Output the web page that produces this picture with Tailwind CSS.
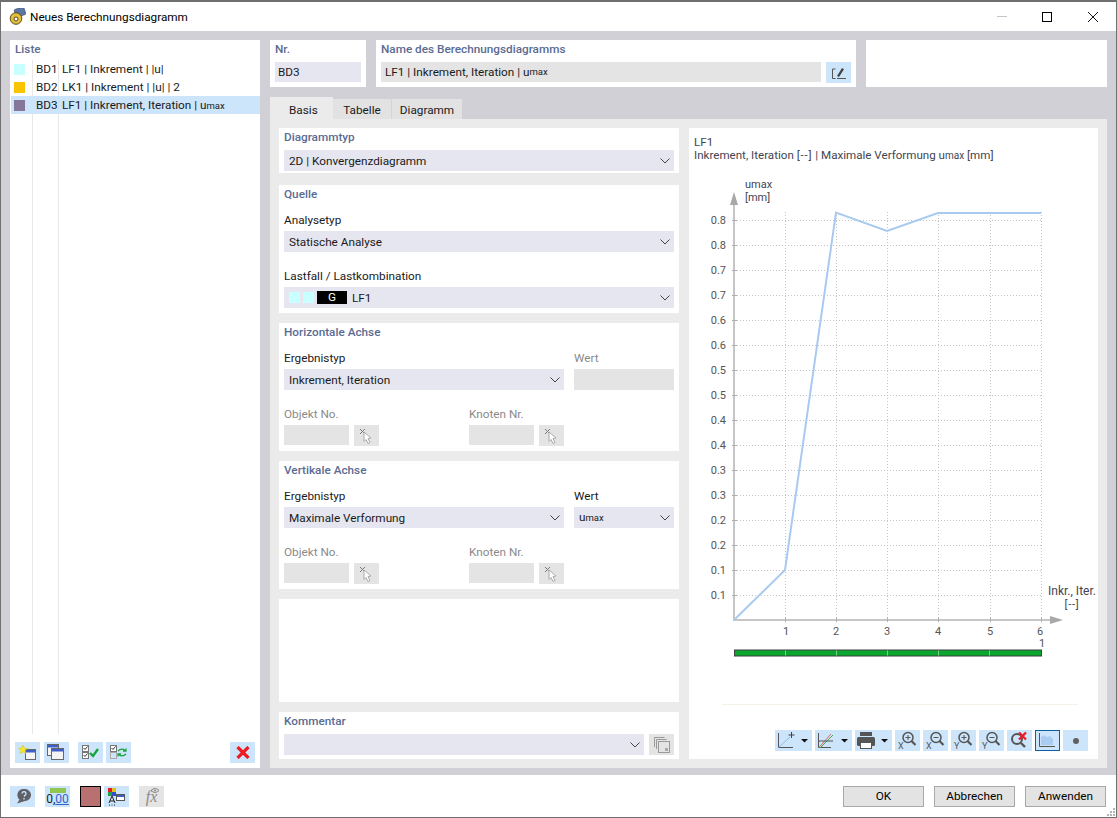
<!DOCTYPE html>
<html><head><meta charset="utf-8"><script src="https://cdn.jsdelivr.net/npm/@tailwindcss/browser@4"></script></head>
<body class="m-0 bg-white">
<div class="relative w-[1117px] h-[818px] flex flex-col overflow-hidden border border-[#6f6f6f] border-t-2 text-[11.75px] leading-[14px] text-[#1a1a1a] font-['Roboto',sans-serif]">
  <!-- title -->
  <div class="h-[29px] shrink-0 bg-white flex items-center">
    <svg class="ml-[8px] w-[17px] h-[17px]" viewBox="0 0 17 17"><rect x="6" y="0" width="10" height="8" rx="1" fill="#5b76a8" stroke="#33415e" stroke-width=".6" transform="rotate(-18 11 4)"/><circle cx="7" cy="10.500" r="5.800" fill="#e2bd3c" stroke="#5a4a1c"/><circle cx="7" cy="11" r="2" fill="#fff" stroke="#5a4a1c"/></svg>
    <span class="ml-[4px] text-black">Neues Berechnungsdiagramm</span>
    <div class="ml-auto flex items-center h-full">
      <span class="w-[10px] h-px bg-[#c4c4c4] mr-[35px]"></span>
      <span class="w-[10px] h-[10px] border border-black mr-[36px]"></span>
      <svg class="w-[10px] h-[10px] mr-[18px]" viewBox="0 0 10 10"><path d="M0 0L10 10M10 0L0 10" stroke="#111" stroke-width="1"/></svg>
    </div>
  </div>
  <!-- body -->
  <div class="h-[744px] shrink-0 bg-[#d0d0d6] flex gap-[10px] pl-[9px] pr-[9px] pt-[9px] pb-[7px]">
    <!-- list -->
    <div class="w-[250px] bg-white flex flex-col relative">
      <div class="h-[20px] pl-[5px] pt-[2px] font-medium text-[#5a6b93]">Liste</div>
      <div class="absolute left-[22px] top-[20px] bottom-[34px] w-px bg-[#e8e8e8]"></div>
      <div class="absolute left-[48px] top-[20px] bottom-[34px] w-px bg-[#e8e8e8]"></div>
      <div class="relative flex items-center h-[18px]"><span class="ml-[4px] w-[11px] h-[11px] bg-[#c8ffff]"></span><span class="ml-[11px] w-[26px]">BD1</span><span>LF1 | Inkrement | |u|</span></div>
      <div class="relative flex items-center h-[18px]"><span class="ml-[4px] w-[11px] h-[11px] bg-[#f8c400]"></span><span class="ml-[11px] w-[26px]">BD2</span><span>LK1 | Inkrement | |u| | 2</span></div>
      <div class="relative flex items-center h-[18px] ml-px bg-[#cce5fb]"><span class="ml-[3px] w-[11px] h-[11px] bg-[#86769a]"></span><span class="ml-[11px] w-[26px]">BD3</span><span>LF1 | Inkrement, Iteration | u<span class="text-[9.5px]">max</span></span></div>
      <div class="mt-auto relative flex items-center h-[21px] mb-[5px] pl-[5px]">
        <button class="w-[25px] h-[21px] bg-[#cce5fb]"><svg class="w-[25px] h-[21px]" viewBox="0 0 25 21"><rect x="10.500" y="7.500" width="10" height="10" fill="#f4f4f4" stroke="#666"/><rect x="11" y="8" width="9" height="2.500" fill="#3f5fc8"/><path d="M8 3l1.300 3.200 3.200.2-2.500 2 .9 3.100L8 9.800l-2.900 1.700.9-3.100-2.500-2 3.200-.2z" fill="#f7e928" stroke="#d1bf10" stroke-width=".5"/></svg></button>
        <button class="ml-[4px] w-[25px] h-[21px] bg-[#cce5fb]"><svg class="w-[25px] h-[21px]" viewBox="0 0 25 21"><rect x="3.500" y="2.500" width="11" height="11" fill="#f4f4f4" stroke="#666"/><rect x="4" y="3" width="10" height="2.500" fill="#3f5fc8"/><rect x="7.500" y="6.500" width="12" height="11" fill="#f4f4f4" stroke="#666"/><rect x="8" y="7" width="11" height="2.500" fill="#3f5fc8"/></svg></button>
        <button class="ml-[9px] w-[25px] h-[21px] bg-[#cce5fb]"><svg class="w-[25px] h-[21px]" viewBox="0 0 25 21"><rect x="4.500" y="3.500" width="6" height="6" fill="#fff" stroke="#777"/><rect x="4.500" y="10.500" width="6" height="6" fill="#fff" stroke="#777"/><path d="M5.500 6l1.500 1.500L9.500 4.500M5.500 13l1.500 1.500L9.500 11.500" stroke="#333" fill="none"/><path d="M12 11l3 3 5-7" stroke="#19a33c" stroke-width="2.400" fill="none"/></svg></button>
        <button class="ml-[3px] w-[25px] h-[21px] bg-[#cce5fb]"><svg class="w-[25px] h-[21px]" viewBox="0 0 25 21"><rect x="4.500" y="3.500" width="6" height="6" fill="#fff" stroke="#777"/><rect x="4.500" y="10.500" width="6" height="6" fill="none" stroke="#aaa"/><path d="M5.500 6l1.500 1.500L9.500 4.500" stroke="#333" fill="none"/><path d="M12 9c2-2 5-2 7-1M20 6.500V9h-3M20 12c-2 2-5 2-7 1M12 14.500V12h3" stroke="#19a33c" stroke-width="1.300" fill="none"/></svg></button>
        <button class="ml-auto mr-[5px] w-[25px] h-[21px] bg-[#cce5fb] flex items-center justify-center"><svg class="w-[14px] h-[13px]" viewBox="0 0 14 13"><path d="M1.500 1l11 11M12.500 1l-11 11" stroke="#ee1c25" stroke-width="3.200"/></svg></button>
      </div>
    </div>
    <!-- right -->
    <div class="w-[837px] flex flex-col">
      <div class="flex h-[47px] gap-[10px] shrink-0">
        <div class="w-[96px] bg-white px-[5px] pt-[2px]">
          <div class="h-[14px] font-medium text-[#5a6b93]">Nr.</div>
          <div class="mt-[6px] h-[20px] bg-[#e6e6f0] flex items-center pl-[3px]">BD3</div>
        </div>
        <div class="w-[480px] bg-white px-[5px] pt-[2px]">
          <div class="h-[14px] font-medium text-[#5a6b93]">Name des Berechnungsdiagramms</div>
          <div class="mt-[6px] flex">
            <div class="w-[440px] h-[20px] bg-[#e4e4e4] flex items-center pl-[4px]">LF1 | Inkrement, Iteration | u<span class="text-[9.5px]">max</span></div>
            <button class="ml-[5px] w-[25px] h-[21px] bg-[#cce5fb] flex items-center justify-center"><svg class="w-[16px] h-[14px]" viewBox="0 0 16 14"><path d="M4.500 3H1.500v9.500h3M6 12.500h9" stroke="#555" fill="none"/><path d="M6 10l5-8 2 1.200L8 11z" fill="#444"/></svg></button>
          </div>
        </div>
        <div class="w-[241px] bg-white"></div>
      </div>
      <div class="h-[22px] mt-[10px] flex items-end shrink-0">
        <div class="w-[63px] h-[22px] bg-[#ebebeb] pl-[19px] pt-[6px]">Basis</div>
        <div class="w-[59px] h-[20px] bg-[#e2e2e2] border-r border-[#d4d4d4] text-center pt-[4px]">Tabelle</div>
        <div class="w-[70px] h-[20px] bg-[#e2e2e2] text-center pt-[4px]">Diagramm</div>
      </div>
      <div class="flex-1 bg-[#ebebeb] flex gap-[10px] pl-[9px] pr-[9px] pt-[9px] pb-[9px]">
        <!-- form -->
        <div class="w-[400px] flex flex-col gap-[10px]">
          <div class="h-[45px] bg-white px-[5px] pt-[2px]">
            <div class="h-[14px] font-medium text-[#5a6b93]">Diagrammtyp</div>
            <div class="mt-[6px] h-[21px] bg-[#e6e6f0] flex items-center pl-[5px]">2D | Konvergenzdiagramm<svg class="ml-auto mr-[4px] w-[10px] h-[6px]" viewBox="0 0 10 6"><path d="M.5.5L5 5 9.500.5" stroke="#444" fill="none"/></svg></div>
          </div>
          <div class="h-[128px] mt-[2px] bg-white px-[5px] pt-[2px]">
            <div class="h-[14px] font-medium text-[#5a6b93]">Quelle</div>
            <div class="mt-[12px] h-[14px]">Analysetyp</div>
            <div class="mt-[4px] h-[21px] bg-[#e6e6f0] flex items-center pl-[5px]">Statische Analyse<svg class="ml-auto mr-[4px] w-[10px] h-[6px]" viewBox="0 0 10 6"><path d="M.5.5L5 5 9.500.5" stroke="#444" fill="none"/></svg></div>
            <div class="mt-[17px] h-[14px]">Lastfall / Lastkombination</div>
            <div class="mt-[4px] h-[21px] bg-[#e6e6f0] flex items-center pl-[5px]"><span class="w-[11px] h-[11px] bg-[#c8ffff]"></span><span class="ml-[3px] w-[11px] h-[11px] bg-[#c8ffff]"></span><span class="ml-[3px] w-[30px] h-[13px] bg-black text-white text-center leading-[13px]">G</span><span class="ml-[5px]">LF1</span><svg class="ml-auto mr-[4px] w-[10px] h-[6px]" viewBox="0 0 10 6"><path d="M.5.5L5 5 9.500.5" stroke="#444" fill="none"/></svg></div>
          </div>
          <div class="h-[128px] bg-white px-[5px] pt-[2px]">
            <div class="h-[14px] font-medium text-[#5a6b93]">Horizontale Achse</div>
            <div class="mt-[12px] flex gap-[10px]">
              <div class="w-[280px]"><div class="h-[14px]">Ergebnistyp</div><div class="mt-[4px] h-[21px] bg-[#e6e6f0] flex items-center pl-[5px]">Inkrement, Iteration<svg class="ml-auto mr-[4px] w-[10px] h-[6px]" viewBox="0 0 10 6"><path d="M.5.5L5 5 9.500.5" stroke="#444" fill="none"/></svg></div></div>
              <div class="w-[100px]"><div class="h-[14px] text-[#8a8a8a]">Wert</div><div class="mt-[4px] h-[21px] bg-[#e4e4e4]"></div></div>
            </div>
            <div class="mt-[17px] flex">
              <div class="w-[185px]"><div class="h-[14px] text-[#8a8a8a]">Objekt No.</div><div class="mt-[4px] flex gap-[5px]"><div class="w-[65px] h-[20px] bg-[#e4e4e4]"></div><div class="w-[25px] h-[21px] bg-[#e4e4e4] flex items-center justify-center"><svg class="w-[16px] h-[16px]" viewBox="0 0 16 16"><path d="M1 1l5 5M6 1L1 6" stroke="#777"/><path d="M5 4l7 6-3 .5 2 4-2 1-2-4-2 2z" fill="#fff" stroke="#aaa"/></svg></div></div></div>
              <div class="w-[185px]"><div class="h-[14px] text-[#8a8a8a]">Knoten Nr.</div><div class="mt-[4px] flex gap-[5px]"><div class="w-[65px] h-[20px] bg-[#e4e4e4]"></div><div class="w-[25px] h-[21px] bg-[#e4e4e4] flex items-center justify-center"><svg class="w-[16px] h-[16px]" viewBox="0 0 16 16"><path d="M1 1l5 5M6 1L1 6" stroke="#777"/><path d="M5 4l7 6-3 .5 2 4-2 1-2-4-2 2z" fill="#fff" stroke="#aaa"/></svg></div></div></div>
            </div>
          </div>
          <div class="h-[128px] bg-white px-[5px] pt-[2px]">
            <div class="h-[14px] font-medium text-[#5a6b93]">Vertikale Achse</div>
            <div class="mt-[12px] flex gap-[10px]">
              <div class="w-[280px]"><div class="h-[14px]">Ergebnistyp</div><div class="mt-[4px] h-[21px] bg-[#e6e6f0] flex items-center pl-[5px]">Maximale Verformung<svg class="ml-auto mr-[4px] w-[10px] h-[6px]" viewBox="0 0 10 6"><path d="M.5.5L5 5 9.500.5" stroke="#444" fill="none"/></svg></div></div>
              <div class="w-[100px]"><div class="h-[14px]">Wert</div><div class="mt-[4px] h-[21px] bg-[#e6e6f0] flex items-center pl-[5px]"><span>u<span class="text-[9.5px]">max</span></span><svg class="ml-auto mr-[4px] w-[10px] h-[6px]" viewBox="0 0 10 6"><path d="M.5.5L5 5 9.500.5" stroke="#444" fill="none"/></svg></div></div>
            </div>
            <div class="mt-[17px] flex">
              <div class="w-[185px]"><div class="h-[14px] text-[#8a8a8a]">Objekt No.</div><div class="mt-[4px] flex gap-[5px]"><div class="w-[65px] h-[20px] bg-[#e4e4e4]"></div><div class="w-[25px] h-[21px] bg-[#e4e4e4] flex items-center justify-center"><svg class="w-[16px] h-[16px]" viewBox="0 0 16 16"><path d="M1 1l5 5M6 1L1 6" stroke="#777"/><path d="M5 4l7 6-3 .5 2 4-2 1-2-4-2 2z" fill="#fff" stroke="#aaa"/></svg></div></div></div>
              <div class="w-[185px]"><div class="h-[14px] text-[#8a8a8a]">Knoten Nr.</div><div class="mt-[4px] flex gap-[5px]"><div class="w-[65px] h-[20px] bg-[#e4e4e4]"></div><div class="w-[25px] h-[21px] bg-[#e4e4e4] flex items-center justify-center"><svg class="w-[16px] h-[16px]" viewBox="0 0 16 16"><path d="M1 1l5 5M6 1L1 6" stroke="#777"/><path d="M5 4l7 6-3 .5 2 4-2 1-2-4-2 2z" fill="#fff" stroke="#aaa"/></svg></div></div></div>
            </div>
          </div>
          <div class="h-[103px] bg-white"></div>
          <div class="h-[47px] bg-white px-[5px] pt-[2px]">
            <div class="h-[14px] font-medium text-[#5a6b93]">Kommentar</div>
            <div class="mt-[6px] flex gap-[5px]">
              <div class="w-[360px] h-[21px] bg-[#e6e6f0] flex items-center"><svg class="ml-auto mr-[4px] w-[10px] h-[6px]" viewBox="0 0 10 6"><path d="M.5.5L5 5 9.500.5" stroke="#444" fill="none"/></svg></div>
              <div class="w-[25px] h-[21px] bg-[#e4e4e4] flex items-center justify-center"><svg class="w-[16px] h-[16px]" viewBox="0 0 16 16" fill="none" stroke="#999"><path d="M.5 10V.5h10M2.500 12V2.500h10"/><rect x="4.500" y="4.500" width="11" height="11" fill="#e4e4e4"/><rect x="11" y="11" width="3" height="3" fill="#aaa" stroke="none"/></svg></div>
            </div>
          </div>
        </div>
        <!-- chart -->
        <div class="w-[409px] h-[631px] bg-white relative">
          <svg class="absolute inset-0 w-[409px] h-[631px] font-['Roboto',sans-serif]" viewBox="689 128 409 631" font-size="11">
            <g fill="#3f4550" font-size="11.600"><text x="694" y="146">LF1</text><text x="694" y="159">Inkrement, Iteration <tspan letter-spacing=".8">[--]</tspan> | Maximale Verformung u<tspan font-size="10">max</tspan> [mm]</text></g>
            <g stroke="#c4c4c4" stroke-dasharray="1 2" fill="none">
              <path d="M734 220.500H1041M734 245.500H1041M734 270.500H1041M734 295.500H1041M734 320.500H1041M734 345.500H1041M734 370.500H1041M734 395.500H1041M734 420.500H1041M734 445.500H1041M734 470.500H1041M734 495.500H1041M734 520.500H1041M734 545.500H1041M734 570.500H1041M734 595.500H1041"/>
              <path d="M785.500 212V620M836.500 212V620M887.500 212V620M938.500 212V620M990.500 212V620M1041.500 212V620"/>
            </g>
            <path d="M734 196V620H1052" stroke="#c6c6c6" stroke-width="2" fill="none"/>
            <path d="M732 220.500h5M732 245.500h5M732 270.500h5M732 295.500h5M732 320.500h5M732 345.500h5M732 370.500h5M732 395.500h5M732 420.500h5M732 445.500h5M732 470.500h5M732 495.500h5M732 520.500h5M732 545.500h5M732 570.500h5M732 595.500h5" stroke="#b0b0b0"/>
            <path d="M785.500 617v5M836.500 617v5M887.500 617v5M938.500 617v5M990.500 617v5M1041.500 617v5" stroke="#b0b0b0"/>
            <path d="M730 205l4-13 4 13z" fill="#a8a8a8"/><path d="M1050 616l13 4-13 4z" fill="#a8a8a8"/>
            <path d="M734 620L785 570L836 212.500L887 231L938 213H1041" stroke="#a9caf0" stroke-width="2" fill="none"/>
            <g fill="#555" text-anchor="end">
              <text x="726" y="224">0.8</text><text x="726" y="249">0.8</text><text x="726" y="274">0.7</text><text x="726" y="299">0.7</text><text x="726" y="324">0.6</text><text x="726" y="349">0.6</text><text x="726" y="374">0.5</text><text x="726" y="399">0.5</text><text x="726" y="424">0.4</text><text x="726" y="449">0.4</text><text x="726" y="474">0.3</text><text x="726" y="499">0.3</text><text x="726" y="524">0.2</text><text x="726" y="549">0.2</text><text x="726" y="574">0.1</text><text x="726" y="599">0.1</text>
            </g>
            <g fill="#555" text-anchor="middle">
              <text x="786" y="635">1</text><text x="836" y="635">2</text><text x="887" y="635">3</text><text x="938" y="635">4</text><text x="990" y="635">5</text><text x="1040" y="635">6</text><text x="1042" y="647">1</text>
            </g>
            <g fill="#3f4550" font-size="11"><text x="745" y="188">umax</text><text x="745" y="201">[mm]</text><text x="1072" y="595" text-anchor="middle" font-size="12">Inkr., Iter.</text><text x="1072" y="608" text-anchor="middle" letter-spacing=".8">[--]</text></g>
            <rect x="734.500" y="650" width="307" height="6" fill="#0aa82e" stroke="#3f3f3f"/>
            <path d="M785.500 650.500v5M836.500 650.500v5M887.500 650.500v5M938.500 650.500v5M989.500 650.500v5" stroke="#7fd08f"/>
            <path d="M722 704.500H1078" stroke="#f6f2e6"/>
          </svg>
          <div class="absolute left-[86px] top-[602px] flex gap-[3px]">
            <button class="w-[37px] h-[21px] bg-[#cce5fb]"><svg class="w-[37px] h-[21px]" viewBox="0 0 37 21" fill="none"><path d="M3.500 3v14.500H18" stroke="#555"/><path d="M3.500 17.500L15 7" stroke="#8ebdf0"/><path d="M13.500 5h6M16.500 2v6" stroke="#444"/><path d="M26 9h7l-3.500 3.500z" fill="#111"/></svg></button>
            <button class="w-[37px] h-[21px] bg-[#cce5fb]"><svg class="w-[37px] h-[21px]" viewBox="0 0 37 21" fill="none"><path d="M3.500 3v14.500H16" stroke="#555"/><path d="M3.500 18L16 4" stroke="#d66"/><path d="M5 18L18 5" stroke="#4a4"/><path d="M3 11h15" stroke="#555"/><path d="M26 9h7l-3.500 3.500z" fill="#111"/></svg></button>
            <button class="w-[37px] h-[21px] bg-[#cce5fb]"><svg class="w-[37px] h-[21px]" viewBox="0 0 37 21"><rect x="5" y="2" width="12" height="4" fill="#555"/><rect x="2" y="7" width="18" height="9" rx="1.500" fill="#555"/><rect x="5.500" y="12.500" width="11" height="6" fill="#fff" stroke="#555"/><path d="M26 9h7l-3.500 3.500z" fill="#111"/></svg></button>
            <button class="w-[25px] h-[21px] bg-[#cce5fb]"><svg class="w-[25px] h-[21px]" viewBox="0 0 25 21" fill="none" stroke="#555"><circle cx="13" cy="7.500" r="5" stroke-width="1.500"/><path d="M16.500 11l4 4" stroke-width="2.200"/><path d="M10.500 7.500h5M13 5v5"/><text x="3" y="19" font-size="9" fill="#555" stroke="none">X</text></svg></button>
            <button class="w-[25px] h-[21px] bg-[#cce5fb]"><svg class="w-[25px] h-[21px]" viewBox="0 0 25 21" fill="none" stroke="#555"><circle cx="13" cy="7.500" r="5" stroke-width="1.500"/><path d="M16.500 11l4 4" stroke-width="2.200"/><path d="M10.500 7.500h5"/><text x="3" y="19" font-size="9" fill="#555" stroke="none">X</text></svg></button>
            <button class="w-[25px] h-[21px] bg-[#cce5fb]"><svg class="w-[25px] h-[21px]" viewBox="0 0 25 21" fill="none" stroke="#555"><circle cx="13" cy="7.500" r="5" stroke-width="1.500"/><path d="M16.500 11l4 4" stroke-width="2.200"/><path d="M10.500 7.500h5M13 5v5"/><text x="3" y="19" font-size="9" fill="#555" stroke="none">Y</text></svg></button>
            <button class="w-[25px] h-[21px] bg-[#cce5fb]"><svg class="w-[25px] h-[21px]" viewBox="0 0 25 21" fill="none" stroke="#555"><circle cx="13" cy="7.500" r="5" stroke-width="1.500"/><path d="M16.500 11l4 4" stroke-width="2.200"/><path d="M10.500 7.500h5"/><text x="3" y="19" font-size="9" fill="#555" stroke="none">Y</text></svg></button>
            <button class="w-[25px] h-[21px] bg-[#cce5fb]"><svg class="w-[25px] h-[21px]" viewBox="0 0 25 21" fill="none"><circle cx="10" cy="9" r="5" stroke="#555" stroke-width="2"/><path d="M14 13l4 4" stroke="#555" stroke-width="2.400"/><path d="M12 2.500l7 7M19 2.500l-7 7" stroke="#ee1c25" stroke-width="2.400"/></svg></button>
            <button class="w-[25px] h-[21px] bg-[#cce5fb] border border-[#0f5fa8]"><svg class="w-[23px] h-[19px]" viewBox="0 0 23 19" fill="none"><path d="M3.500 2v13.500H19" stroke="#555"/><path d="M5 14V6l3-2 3 2 3-1 3 3v6z" fill="#a9cdf2"/></svg></button>
            <button class="w-[25px] h-[21px] bg-[#cce5fb] flex items-center justify-center"><span class="w-[6px] h-[6px] rounded-full bg-[#606060]"></span></button>
          </div>
        </div>
      </div>
    </div>
  </div>
  <!-- footer -->
  <div class="flex-1 bg-white flex items-center pl-[9px] pr-[10px]">
    <button class="w-[25px] h-[21px] bg-[#cce5fb] flex items-center justify-center"><svg class="w-[16px] h-[16px]" viewBox="0 0 16 16"><path d="M9 1a6.500 6 0 0 1 1 12L2 15.500l2.500-4A6 6 0 0 1 9 1z" fill="#606068"/><path d="M7 5.500a2 2 0 1 1 3 1.800L9 8.500M9 10v1.500" stroke="#cce5fb" stroke-width="1.300" fill="none"/></svg></button>
    <button class="ml-[10px] w-[25px] h-[21px] bg-[#cce5fb] flex flex-col items-center"><span class="w-[16px] h-[5px] mt-[2px] bg-[#8fc64f]"></span><span class="text-[12px] leading-[13px]">0,<span class="text-[#2f63c8] underline">00</span></span></button>
    <span class="ml-[10px] w-[21px] h-[21px] bg-[#b87070] border border-black"></span>
    <button class="ml-[3px] w-[25px] h-[21px] bg-[#cce5fb]"><svg class="w-[25px] h-[21px]" viewBox="0 0 25 21"><rect x="4" y="2" width="4" height="4" fill="#e02020"/><rect x="8" y="2" width="4" height="4" fill="#e0c020"/><rect x="4" y="6" width="4" height="4" fill="#20a040"/><rect x="8" y="6" width="4" height="4" fill="#3050d0"/><path d="M5 17l3-7 3 7M6 15h4M5 19h1M7.500 19h1M10 19h1" stroke="#222" fill="none"/><rect x="12.500" y="8.500" width="8" height="6" fill="#fff" stroke="#555"/><rect x="13" y="9" width="7" height="2" fill="#3f5fc8"/></svg></button>
    <button class="relative ml-[10px] w-[25px] h-[21px] bg-[#e4e4e4] font-['Liberation_Serif',serif] italic text-[16px] leading-[21px] text-[#8a8a8a]">fx<svg class="absolute left-[11px] top-[1px] w-[10px] h-[7px]" viewBox="0 0 10 7" fill="none" stroke="#8a8a8a"><path d="M1 3.500Q5-.5 9 3.500Q5 7.500 1 3.500z"/><circle cx="5" cy="3.500" r="1" fill="#8a8a8a" stroke="none"/></svg></button>
    <div class="ml-auto flex gap-[10px] text-black">
      <button class="w-[81px] h-[21px] bg-[#e3e3e3] border border-[#a8a8a8]">OK</button>
      <button class="w-[81px] h-[21px] bg-[#e3e3e3] border border-[#a8a8a8]">Abbrechen</button>
      <button class="w-[81px] h-[21px] bg-[#e3e3e3] border border-[#a8a8a8]">Anwenden</button>
    </div>
  </div>
  <svg class="absolute right-[1px] bottom-[1px] w-[8px] h-[8px]" viewBox="0 0 8 8" fill="#b4b4b4"><rect x="6" y="0" width="2" height="2"/><rect x="3" y="3" width="2" height="2"/><rect x="6" y="3" width="2" height="2"/><rect x="0" y="6" width="2" height="2"/><rect x="3" y="6" width="2" height="2"/><rect x="6" y="6" width="2" height="2"/></svg>
</div>
</body></html>
